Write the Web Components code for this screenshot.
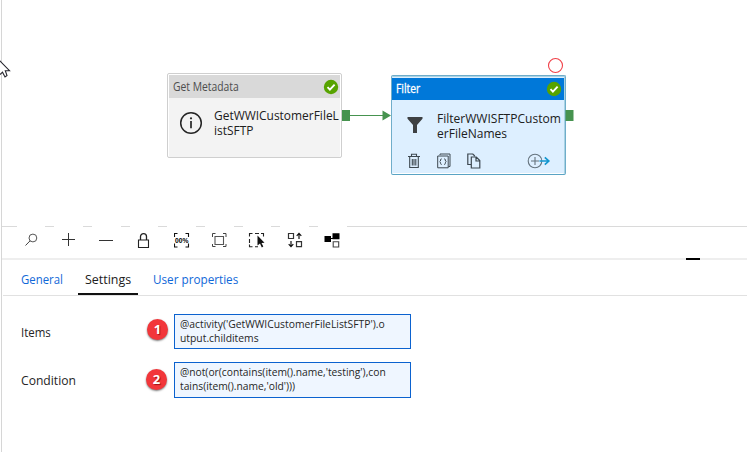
<!DOCTYPE html>
<html lang="en"><head><meta charset="utf-8"><title>Pipeline editor</title>
<style>
html,body{margin:0;width:747px;height:452px;overflow:hidden;background:#fff;font-family:"Open Sans","Noto Sans",sans-serif;font-variant-ligatures:none}
</style></head><body>
<pipeline-editor></pipeline-editor>
<script>
const define=(name,html,after)=>customElements.define(name,class extends HTMLElement{
  connectedCallback(){ if(this.shadowRoot) return;
    const root=this.attachShadow({mode:'open'});
    root.innerHTML=typeof html==='function'?html(this):html;
    if(after) after(this,root);
  }
});

/* Text condensed or widened to the width in its "w" attribute; "|" breaks a line. */
define('fit-text',`<style>:host{display:block;text-align:left}span{display:inline-block;white-space:pre;transform-origin:0 50%;vertical-align:top}</style><span></span>`,(el,root)=>{
  const s=root.querySelector('span'); s.textContent=el.getAttribute('t').replace('|','\n');
  const w=+el.getAttribute('w'); el.style.width=w+'px';
  s.style.transform=`scaleX(${w/s.offsetWidth})`;
});

const icons={
 info:[24,24,'<circle cx="12" cy="12" r="10.3" fill="none" stroke="#252525" stroke-width="1.5"/><path d="M12 10v7.2" stroke="#252525" stroke-width="1.7"/><circle cx="12" cy="7.3" r="1.1" fill="#252525"/>'],
 funnel:[16,18,'<path d="M.5 1h15v1.7L10 9v8H6V9L.5 2.7z" fill="#3d4043"/>'],
 check:[16,16,'<circle cx="8" cy="8" r="7.2" fill="#57a300"/><path d="M4.5 8.2l2.4 2.4 4.7-4.9" fill="none" stroke="#fff" stroke-width="1.9"/>'],
 trash:[14,16,'<path d="M1 3.5h12M4.5 3V1.2h5V3M2.7 4v10.5h8.6V4M5.3 6v6.5M7 6v6.5M8.8 6v6.5" fill="none" stroke="#3d4850" stroke-width="1.1"/>'],
 code:[14,16,'<path d="M3 2V1h10v12.5h-1.5" fill="none" stroke="#3d4850"/><path d="M.7 3h10.5v11.8H.7z" fill="none" stroke="#3d4850"/><path d="M4.6 5.8q-1 0-1 1.2t-.9 1.7q.9.4.9 1.6t1 1.2M7.3 5.8q1 0 1 1.2t.9 1.7q-.9.4-.9 1.6t-1 1.2" fill="none" stroke="#3d4850"/>'],
 copy:[14,16,'<path d="M4 11.5H.8V1h5l2 2M4.3 4h5l3.5 3.5v7.5H4.3zM9 4v4h3.8" fill="none" stroke="#3d4850" stroke-width="1.2"/>'],
 addout:[24,16,'<circle cx="8" cy="8" r="6.8" fill="none" stroke="#65737e" stroke-width="1.1"/><path d="M8 4v8M4 8h8" stroke="#65737e" stroke-width="1.1"/><path d="M12.5 8h9M17.8 4.3 21.8 8l-4 3.7" fill="none" stroke="#1296cf" stroke-width="1.7"/>'],
 search:[16,16,'<circle cx="9.9" cy="6" r="3.9" fill="none" stroke="#555"/><path d="M7.1 8.8 2.5 13.5" stroke="#444"/>'],
 plus:[16,16,'<path d="M7.5 1v13M1 7.5h13" stroke="#333"/>'],
 minus:[16,16,'<path d="M1 8.5h14" stroke="#333"/>'],
 lock:[16,16,'<path d="M2.5 8h10v7.5h-10z" fill="none" stroke="#222" stroke-width="1.1"/><path d="M4.5 8V4.6a3 3 0 0 1 6 0V8" fill="none" stroke="#222" stroke-width="1.3"/>'],
 zoom:[16,16,'<path d="M.5 5V1.5h3M11.5 1.5h3V5M.5 11.5V15h3M11.5 15h3v-3.5" fill="none" stroke="#111" stroke-width="1.1"/><text x="1" y="10.7" textLength="13.4" lengthAdjust="spacingAndGlyphs" font-family="Liberation Sans,sans-serif" font-weight="700" font-size="6.5" fill="#000">00%</text>'],
 fit:[16,16,'<path d="M4 4.5h8.5v8H4z" fill="none" stroke="#555" stroke-width="1.1"/><path d="M1.5 5V1.5H4.5M12 1.5H15V5M1.5 12V14.5H4.5M12 14.5H15V12" fill="none" stroke="#444"/>'],
 select:[18,16,'<path d="M1.5 4.5v-3h3M7 1.5h4M13 1.5h2.5v3M1.5 7v4M1.5 12.5v2.3h3M7 14.8h3" fill="none" stroke="#222" stroke-width="1.1"/><path d="M9.5 3.5 16.5 10.7l-3 .2 1.8 3.7-1.5.9-1.8-3.9-2.5 2z" fill="#111"/>'],
 swap:[16,16,'<path d="M1.5 1.5h5v5h-5zM9.5 9.7h5v5h-5z" fill="none" stroke="#333" stroke-width="1.2"/><path d="M12 7V1.5M9.7 3.8 12 1.4l2.3 2.4M4 9v5.5M1.7 12.2 4 14.6l2.3-2.4" fill="none" stroke="#111" stroke-width="1.2"/>'],
 layout:[16,16,'<path d="M.5 4h6.5v6H.5zM8.5 1.3h7v6h-7z" fill="#000"/><path d="M7 6.5h3" stroke="#000"/><path d="M9.2 9.8h5.5v5.2H9.2z" fill="#fff" stroke="#444" stroke-width="1.1"/>']
};
define('ui-icon',el=>{const [w,h,p]=icons[el.getAttribute('name')];return `<style>:host{display:block;flex:none;width:${w}px;height:${h}px}svg{display:block}</style><svg width="${w}" height="${h}" viewBox="0 0 ${w} ${h}">${p}</svg>`});

define('activity-node',el=>{const on=el.hasAttribute('selected');return `<style>
:host{display:block;box-sizing:border-box;width:175px;height:${on?100:85}px;padding:${on?'2px 1px 1px 0':'1px 1px 1px'};border:1px solid ${on?'#6fadca':'#cfcfcf'};border-radius:2px;background:${on?'#ddefff':'#f3f3f3'};${on?'border-bottom-color:#5aa4c4;box-shadow:inset 0 1px #a9d2e3,inset -1px 0 #a9d2e3,inset 0 -1px #fff':'box-shadow:inset 0 1px #fff,inset 1px 0 #fff,inset -1px 0 #fff'}}
header{height:${on?22:23}px;display:flex;align-items:center;justify-content:space-between;box-sizing:border-box;padding:0 ${on?2:1}px 0 ${on?5:4}px;background:${on?'#0078d9':'#d9d9d9'};color:${on?'#fff':'#4d4d4d'};font-size:12px;line-height:20px;${on?'padding-left:4px;-webkit-text-stroke:.3px #fff':''}}
.body{display:flex;align-items:flex-start;height:${on?50:58}px;font-size:13px;line-height:15px;color:#202020}
.symbol{display:flex;justify-content:center;width:${on?45:44}px;padding-top:${on?16:13}px}.lines{padding-top:${on?11:10}px;padding-left:${on?0:1}px}
footer{display:flex;align-items:center;padding:3px 13px 0 15px}
footer ui-icon{margin-right:16px}footer ui-icon:last-child{margin:0 0 0 auto}
</style><header><fit-text t="${el.getAttribute('kind')}" w="${el.getAttribute('kw')}"></fit-text><ui-icon name="check"></ui-icon></header>
<div class="body"><div class="symbol"><ui-icon name="${el.getAttribute('icon')}"></ui-icon></div><div class="lines"><slot></slot></div></div>
${on?'<footer><ui-icon name="trash"></ui-icon><ui-icon name="code"></ui-icon><ui-icon name="copy"></ui-icon><ui-icon name="addout"></ui-icon></footer>':''}`});

define('pipeline-canvas',`<style>
:host{display:block;position:relative;height:226px;border-bottom:1px solid #dadada}
activity-node,svg{position:absolute}.a{left:165px;top:73px}.b{left:389px;top:75px}svg{left:-2px;top:0;pointer-events:none}
</style>
<activity-node class="a" kind="Get Metadata" kw="65.5" icon="info"><fit-text t="GetWWICustomerFileL|istSFTP" w="125"></fit-text></activity-node>
<activity-node class="b" kind="Filter" kw="24" icon="funnel" selected><fit-text t="FilterWWISFTPCustom|erFileNames" w="124"></fit-text></activity-node>
<svg width="747" height="226" viewBox="0 0 747 226"><path d="M342 110h8v11h-8zM565.5 110h8v11h-8zM382.5 110.5l8.5 5-8.5 5z" fill="#46934f"/><path d="M350 115.5h34" stroke="#46934f"/><circle cx="555.5" cy="65.5" r="7" fill="#fff" stroke="#f04048" stroke-width="1.1"/><path d="M-1 60 9.5 70.7H5.3L7 75.5 5 77l-2.5-4.8L0 74.5" fill="#fff" stroke="#26262e" stroke-width="1.1"/></svg>`);

define('canvas-toolbar',`<style>
:host{display:flex;gap:9px;height:31px;padding-left:14.5px;border-bottom:2px solid #eee;position:relative}
div{width:28.7px;height:28px;margin-top:-1px;background:#fff;display:flex;align-items:center;justify-content:center}
i{position:absolute;left:684px;bottom:-2px;width:14px;height:2px;background:#000}
</style>${['search','plus','minus','lock','zoom','fit','select','swap','layout'].map(n=>`<div><ui-icon name="${n}"></ui-icon></div>`).join('')}<i></i>`);

define('tab-bar',`<style>
:host{display:flex;align-items:flex-start;height:35px;margin-left:1px;border-bottom:1px solid #e1e1e1;font-size:13px;line-height:38px;color:#1068d8}
div{height:35px;box-sizing:border-box}.g{padding:0 15px 0 18px}.s{padding:0 7px;color:#202020;border-bottom:2px solid #111;width:60px}.u{padding-left:15px}
</style><div class="g"><fit-text t="General" w="42"></fit-text></div><div class="s"><fit-text t="Settings" w="46"></fit-text></div><div class="u"><fit-text t="User properties" w="85.5"></fit-text></div>`);

define('step-badge',`<style>:host{display:flex;align-items:center;justify-content:center;width:21px;height:21px;border-radius:50%;background:#f2363a;color:#fff;font:700 13px/21px "Open Sans",sans-serif;box-shadow:0 1px 2px #0008;text-shadow:1px 1px 1px #700a}</style><slot></slot>`);

define('expression-box',`<style>:host{display:block;box-sizing:border-box;width:237px;height:35px;border:1px solid #0b62cf;background:#eff6ff;padding:2px 0 0 5px;font-size:11px;line-height:14px;color:#262626}</style><slot></slot>`);

define('setting-row',el=>`<style>:host{display:grid;grid-template-columns:${el.getAttribute('b')}px ${172-el.getAttribute('b')}px 237px;align-items:center;font-size:13px;line-height:20px;color:#252525}.l{padding-left:18.5px}step-badge{margin-top:${el.getAttribute('up')}px}</style>
<div class="l"><fit-text t="${el.getAttribute('label')}" w="${el.getAttribute('lw')}"></fit-text></div><step-badge>${el.getAttribute('n')}</step-badge><slot></slot>`);

define('settings-panel',`<style>:host{display:grid;gap:13px;padding-top:18px}</style>
<setting-row label="Items" lw="30" n="1" b="145" up="-5"><expression-box><fit-text t="@activity('GetWWICustomerFileListSFTP').o|utput.childitems" w="205"></fit-text></expression-box></setting-row>
<setting-row label="Condition" lw="55" n="2" b="144" up="-1"><expression-box style="height:36px"><fit-text t="@not(or(contains(item().name,'testing'),con|tains(item().name,'old')))" w="205.5"></fit-text></expression-box></setting-row>`);

define('pipeline-editor',`<style>:host{display:block;box-sizing:border-box;width:746px;height:452px;margin-left:1px;border-left:1px solid #d6d6d6}</style>
<pipeline-canvas></pipeline-canvas><canvas-toolbar></canvas-toolbar><tab-bar></tab-bar><settings-panel></settings-panel>`);
</script></body></html>
